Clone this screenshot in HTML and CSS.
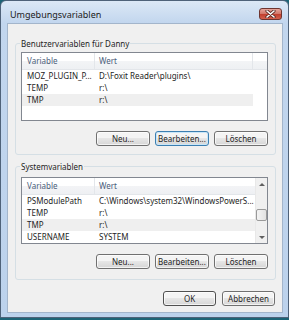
FILE: index.html
```html
<!DOCTYPE html>
<html lang="de">
<head>
    <meta charset="UTF-8">
    <title>Umgebungsvariablen</title>
    <link rel="stylesheet" href="styles.css">
</head>
<body>
    <div class="window">
        <div class="titlebar">
            <span class="title">Umgebungsvariablen</span>
            <button class="close">
                <svg width="11" height="8" viewBox="0 0 11 8">
                    <path d="M2 1 L9 7 M9 1 L2 7" stroke="#5a2a24" stroke-width="3.2" stroke-linecap="round"/>
                    <path d="M2 1 L9 7 M9 1 L2 7" stroke="#ffffff" stroke-width="1.6" stroke-linecap="round"/>
                </svg>
            </button>
        </div>
        <div class="client">
            <div class="group user">
                <span class="group-label">Benutzervariablen für Danny</span>
                <div class="list">
                    <div class="list-body">
                        <div class="list-head">
                            <div class="col name">Variable</div>
                            <div class="col value">Wert</div>
                            <div class="col rest"></div>
                        </div>
                        <div class="row">
                            <div class="col name">MOZ_PLUGIN_P...</div>
                            <div class="col value">D:\Foxit Reader\plugins\</div>
                        </div>
                        <div class="row">
                            <div class="col name">TEMP</div>
                            <div class="col value">r:\</div>
                        </div>
                        <div class="row selected">
                            <div class="col name">TMP</div>
                            <div class="col value">r:\</div>
                        </div>
                    </div>
                </div>
                <div class="buttons">
                    <button class="btn">Neu...</button>
                    <button class="btn focused">Bearbeiten...</button>
                    <button class="btn">Löschen</button>
                </div>
            </div>

            <div class="group system">
                <span class="group-label">Systemvariablen</span>
                <div class="list">
                    <div class="list-body">
                        <div class="list-head">
                            <div class="col name">Variable</div>
                            <div class="col value">Wert</div>
                        </div>
                        <div class="row">
                            <div class="col name">PSModulePath</div>
                            <div class="col value">C:\Windows\system32\WindowsPowerS...</div>
                        </div>
                        <div class="row">
                            <div class="col name">TEMP</div>
                            <div class="col value">r:\</div>
                        </div>
                        <div class="row selected">
                            <div class="col name">TMP</div>
                            <div class="col value">r:\</div>
                        </div>
                        <div class="row">
                            <div class="col name">USERNAME</div>
                            <div class="col value">SYSTEM</div>
                        </div>
                    </div>
                    <div class="scrollbar">
                        <div class="arrow up"></div>
                        <div class="track">
                            <div class="thumb"></div>
                        </div>
                        <div class="arrow down"></div>
                    </div>
                </div>
                <div class="buttons">
                    <button class="btn">Neu...</button>
                    <button class="btn">Bearbeiten...</button>
                    <button class="btn">Löschen</button>
                </div>
            </div>

            <div class="dialog-buttons">
                <button class="btn default">OK</button>
                <button class="btn">Abbrechen</button>
            </div>
        </div>
    </div>
</body>
</html>
```

FILE: styles.css
```css
/* Reset styles */
* {
    margin: 0;
    padding: 0;
    box-sizing: border-box;
    font-family: 'Noto Sans', sans-serif;
}

body {
    background: #1d6476;
    font-size: 8px;
    color: #1e1e1e;
    height: 320px;
    overflow: hidden;
}

.window {
    width: 289px;
    height: 318px;
    border: 1px solid #4f6279;
    border-radius: 6px 6px 0 0;
    background: linear-gradient(#dce8f6, #c2d6ee 22px, #bcd2ec);
    padding: 0 5px 4px 6px;
}

.titlebar {
    height: 22px;
    display: flex;
    align-items: flex-start;
    justify-content: space-between;
}

.title {
    margin: 8px 0 0 3px;
    font-size: 9px;
    line-height: 11px;
    color: #1b1b1b;
}

.close {
    width: 23px;
    height: 12px;
    margin: 7px 1px 0 0;
    border: 1px solid #6e3530;
    border-radius: 3px;
    background: linear-gradient(#e7a59b, #d47a6c 45%, #c2402f 55%, #d4604d);
    display: flex;
    align-items: center;
    justify-content: center;
}

.client {
    height: 290px;
    background: #f0f0f0;
    border: 1px solid #a3b5cb;
    padding-top: 19px;
}

.group {
    margin: 0 6px 0 7px;
    border: 1px solid #d5dfe5;
    border-radius: 3px;
    padding: 0 7px 8px 5px;
}

.group.system {
    margin-top: 11px;
    padding-bottom: 10px;
}

.group-label {
    display: block;
    width: fit-content;
    margin: -6px 0 0 -1px;
    padding: 0 1px;
    height: 11px;
    line-height: 11px;
    background: #f0f0f0;
    color: #1e1e1e;
}

.list {
    display: flex;
    background: #ffffff;
    border: 1px solid #828790;
    margin-top: 3px;
}

.user .list {
    height: 69px;
}

.system .list {
    height: 67px;
    margin-top: 5px;
}

.list-body {
    flex: 1;
    overflow: hidden;
}

.list-head {
    display: flex;
    height: 17px;
    line-height: 16px;
    background: linear-gradient(#ffffff 50%, #f3f4f6 50%, #eef0f3);
    border-bottom: 1px solid #e3e6ea;
    color: #4c607a;
}

.list-head .col {
    border-right: 1px solid #e3e6ea;
}

.list-head .rest {
    flex: 1;
    border-right: none;
}

.row {
    display: flex;
    height: 12px;
    line-height: 12px;
}

.user .row {
    width: 231px;
}

.row.selected {
    background: #efefef;
}

.col {
    white-space: nowrap;
    overflow: hidden;
}

.col.name {
    width: 73px;
    padding-left: 5px;
}

.col.value {
    width: 158px;
    padding-left: 4px;
}

.system .col.value {
    flex: 1;
    border-right: none;
}

.scrollbar {
    width: 12px;
    display: flex;
    flex-direction: column;
    background: #f0f0f0;
    border-left: 1px solid #e8e8e8;
}

.arrow {
    height: 12px;
    display: flex;
    align-items: center;
    justify-content: center;
}

.arrow::after {
    content: "";
    border-left: 3px solid transparent;
    border-right: 3px solid transparent;
}

.arrow.up::after {
    border-bottom: 3px solid #606060;
}

.arrow.down::after {
    border-top: 3px solid #606060;
}

.track {
    flex: 1;
    padding-top: 19px;
}

.thumb {
    height: 12px;
    border: 1px solid #9a9a9a;
    border-radius: 2px;
    background: linear-gradient(90deg, #f4f4f4, #e2e2e2);
}

.buttons {
    display: flex;
    justify-content: flex-end;
    gap: 5px;
    margin-top: 10px;
}

.btn {
    width: 54px;
    height: 15px;
    padding: 0;
    border: 1px solid #707070;
    border-radius: 3px;
    background: linear-gradient(#f4f4f4 45%, #e6e6e6 50%, #d6d6d6);
    box-shadow: inset 0 0 0 1px rgba(255, 255, 255, 0.7);
    font-size: 8px;
    color: #1e1e1e;
    line-height: 12px;
}

.btn.focused {
    border-color: #3c7fb1;
    box-shadow: inset 0 0 0 1px #c9e6f8;
}

.btn.default {
    border-color: #505050;
}

.dialog-buttons {
    display: flex;
    justify-content: flex-end;
    gap: 6px;
    margin: 11px 7px 0 0;
}

.dialog-buttons .btn {
    width: 53px;
}
```
